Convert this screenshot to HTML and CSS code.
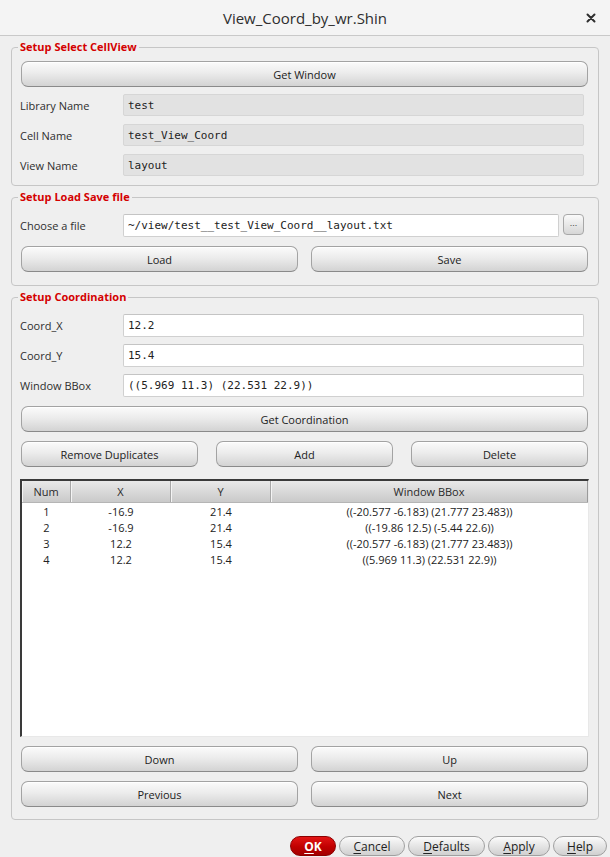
FILE: index.html
```html
<!DOCTYPE html>
<html>
<head>
<meta charset="utf-8">
<title>View_Coord_by_wr.Shin</title>
<link rel="stylesheet" href="styles.css">
</head>
<body>
<div class="win">
  <header class="titlebar">
    <span></span>
    <span class="title">View_Coord_by_wr.Shin</span>
    <span class="close"><svg width="10" height="10" viewBox="0 0 10 10"><path d="M1.5 1.5 L8.5 8.5 M8.5 1.5 L1.5 8.5" stroke="#2e2e2e" stroke-width="2" stroke-linecap="round"/></svg></span>
  </header>

  <fieldset class="group g1">
    <legend>Setup Select CellView</legend>
    <button class="btn">Get Window</button>
    <div class="row r-first"><label>Library Name</label><div class="field ro">test</div></div>
    <div class="row"><label>Cell Name</label><div class="field ro">test_View_Coord</div></div>
    <div class="row"><label>View Name</label><div class="field ro">layout</div></div>
  </fieldset>

  <fieldset class="group g2">
    <legend>Setup Load Save file</legend>
    <div class="row file-row"><label>Choose a file</label><div class="field">~/view/test__test_View_Coord__layout.txt</div><button class="dots">...</button></div>
    <div class="two">
      <button class="btn">Load</button>
      <button class="btn">Save</button>
    </div>
  </fieldset>

  <fieldset class="group g3">
    <legend>Setup Coordination</legend>
    <div class="row wrow first"><label>Coord_X</label><div class="field">12.2</div></div>
    <div class="row wrow"><label>Coord_Y</label><div class="field">15.4</div></div>
    <div class="row wrow"><label>Window BBox</label><div class="field">((5.969 11.3) (22.531 22.9))</div></div>
    <button class="btn gap9">Get Coordination</button>
    <div class="three">
      <button class="btn">Remove Duplicates</button>
      <button class="btn">Add</button>
      <button class="btn">Delete</button>
    </div>
    <div class="table">
      <div class="thead">
        <div class="th">Num</div>
        <div class="th">X</div>
        <div class="th">Y</div>
        <div class="th">Window BBox</div>
      </div>
      <div class="tr"><div>1</div><div>-16.9</div><div>21.4</div><div>((-20.577 -6.183) (21.777 23.483))</div></div>
      <div class="tr"><div>2</div><div>-16.9</div><div>21.4</div><div>((-19.86 12.5) (-5.44 22.6))</div></div>
      <div class="tr"><div>3</div><div>12.2</div><div>15.4</div><div>((-20.577 -6.183) (21.777 23.483))</div></div>
      <div class="tr"><div>4</div><div>12.2</div><div>15.4</div><div>((5.969 11.3) (22.531 22.9))</div></div>
    </div>
    <div class="two gap9">
      <button class="btn">Down</button>
      <button class="btn">Up</button>
    </div>
    <div class="two gap9">
      <button class="btn">Previous</button>
      <button class="btn">Next</button>
    </div>
  </fieldset>

  <footer class="actions">
    <button class="pill ok"><u>O</u>K</button>
    <button class="pill w-cancel"><u>C</u>ancel</button>
    <button class="pill w-defaults"><u>D</u>efaults</button>
    <button class="pill w-apply"><u>A</u>pply</button>
    <button class="pill w-help"><u>H</u>elp</button>
  </footer>
</div>
</body>
</html>
```
FILE: styles.css
```css
* { box-sizing: border-box; }
html, body { margin: 0; padding: 0; }
body {
  width: 610px;
  height: 857px;
  overflow: hidden;
  background: #efefef;
  font-family: "Open Sans", "Noto Sans", sans-serif;
  font-size: 11px;
  color: #2e2e2e;
}
.win { display: flex; flex-direction: column; height: 857px; }

.titlebar {
  height: 36px;
  flex: none;
  display: grid;
  grid-template-columns: 1fr auto 1fr;
  align-items: center;
  background: #f4f4f4;
  border-bottom: 1px solid #c9c9c9;
}
.title { font-size: 15px; color: #2e2e2e; }
.close { justify-self: end; margin-right: 14px; display: flex; }

.group {
  margin: 4px 11px 0 11px;
  border: 1px solid #c6c6c6;
  border-radius: 4px;
  min-width: 0;
  padding: 7px 10px 9px 9px;
  display: flex;
  flex-direction: column;
}
.group legend {
  color: #d40000;
  font-weight: bold;
  font-size: 11px;
  line-height: 14px;
  padding: 0 2px;
  margin-left: -3px;
}
.g2 { padding-top: 10px; padding-bottom: 13px; }
.g3 { padding-top: 10px; padding-bottom: 12px; }

.btn {
  height: 26px;
  border: 1px solid #a3a3a3;
  border-bottom-color: #8a8a8a;
  border-radius: 7px;
  background: linear-gradient(#fbfbfb, #ececec 45%, #d3d3d3);
  font-family: "Open Sans", "Noto Sans", sans-serif;
  font-size: 11px;
  color: #222;
  padding: 0;
  box-shadow: inset 0 1px 0 #ffffff;
}

.row {
  display: grid;
  grid-template-columns: 103px 1fr;
  align-items: center;
  margin: 8px 4px 0 -1px;
}
.row.r-first { margin-top: 7px; }
.row label { font-size: 11px; color: #2e2e2e; }
.field {
  height: 23px;
  background: #ffffff;
  border: 1px solid #d0d0d0;
  border-top-color: #c4c4c4;
  border-radius: 2px;
  padding: 0 4px;
  font-family: "DejaVu Sans Mono", monospace;
  font-size: 11px;
  color: #222;
  display: flex;
  align-items: center;
  white-space: nowrap;
  overflow: hidden;
}
.field.ro {
  height: 22px;
  background: #e2e2e2;
  border-color: #d6d6d6;
}
.file-row { grid-template-columns: 103px 1fr 25px; margin-top: 0; }
.dots {
  height: 21px;
  width: 21px;
  margin-left: 4px;
  padding: 0 0 4px;
  border: 1px solid #a8a8a8;
  border-radius: 4px;
  background: linear-gradient(#fafafa, #d6d6d6);
  font-size: 9px;
  color: #444;
  align-self: start;
}
.wrow { margin-top: 7px; }
.wrow.first { margin-top: 0; }

.two {
  display: grid;
  grid-template-columns: 1fr 1fr;
  column-gap: 13px;
  margin-top: 9px;
}
.three {
  display: grid;
  grid-template-columns: 1fr 1fr 1fr;
  column-gap: 18px;
  margin-top: 9px;
}
.gap9 { margin-top: 9px; }

.table {
  margin: 12px -1px 0 -1px;
  height: 258px;
  background: #ffffff;
  border-top: 2px solid #3a3a3a;
  border-left: 2px solid #3a3a3a;
  border-right: 1px solid #e8e8e8;
  border-bottom: 1px solid #e8e8e8;
}
.thead, .tr {
  display: grid;
  grid-template-columns: 49px 100px 100px 1fr;
}
.thead {
  height: 22px;
  background: linear-gradient(#e9e9e9, #d9d9d9 50%, #c9c9c9);
  border-bottom: 1px solid #b5b5b5;
}
.th {
  display: flex;
  align-items: center;
  justify-content: center;
  border-right: 1px solid #a8a8a8;
  box-shadow: inset 1px 0 0 #f4f4f4;
  color: #2a2a2a;
}
.th:last-child { border-right-color: #9a9a9a; }
.tr { height: 16px; line-height: 16px; text-align: center; color: #222; }
.thead + .tr { margin-top: 1px; }

.actions {
  margin-top: auto;
  display: flex;
  justify-content: flex-end;
  gap: 3px;
  padding: 0 3px 1px 0;
}
.pill {
  height: 20px;
  border: 1px solid #a0a0a0;
  border-radius: 10px;
  background: linear-gradient(#fbfbfb, #e3e3e3 55%, #d0d0d0);
  font-family: "Open Sans", "Noto Sans", sans-serif;
  font-size: 12px;
  color: #222;
  padding: 0;
  line-height: 17px;
  text-align: center;
}
.w-cancel { width: 66px; }
.w-defaults { width: 77px; }
.w-apply { width: 62px; }
.w-help { width: 54px; }
.pill u { text-decoration-thickness: 1px; text-underline-offset: 2px; }
.pill.ok {
  width: 46px;
  background: linear-gradient(#e31515, #c00000 55%, #a30000);
  border-color: #8c0000;
  color: #ffffff;
  font-weight: bold;
}
```
